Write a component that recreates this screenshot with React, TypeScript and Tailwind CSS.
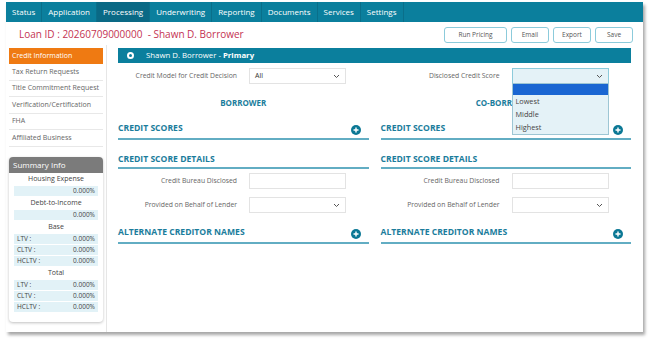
import React from 'react';

const tabs = ['Status', 'Application', 'Processing', 'Underwriting', 'Reporting', 'Documents', 'Services', 'Settings'];
const menu = ['Tax Return Requests', 'Title Commitment Request', 'Verification/Certification', 'FHA', 'Affiliated Business'];

const Chevron = () => (
  <svg width="7" height="5" viewBox="0 0 7 5" className="text-[#555]">
    <path d="M1 1l2.5 2.5L6 1" fill="none" stroke="currentColor" strokeWidth="1" />
  </svg>
);

const PlusIcon = () => (
  <span className="w-[10px] h-[10px] rounded-full bg-[#0b7895] flex items-center justify-center">
    <svg width="6" height="6" viewBox="0 0 6 6">
      <path d="M3 0.5v5M0.5 3h5" stroke="#fff" strokeWidth="1.4" />
    </svg>
  </span>
);

// section title with the teal rule under it; the plus variant sits a bit taller
const SectionHead: React.FC<{ title: string; plus?: boolean }> = ({ title, plus }) => (
  <div className={`flex items-start justify-between border-b-2 border-[#62adc3] pr-[8px] ${plus ? 'h-[17px]' : 'h-[15px]'}`}>
    <span className="text-[8.6px] leading-[11px] font-bold text-[#1b7d9c]">{title}</span>
    {plus && <span className="mt-[2px]"><PlusIcon /></span>}
  </div>
);

const Field: React.FC<{ label: string; select?: boolean; value?: string }> = ({ label, select, value }) => (
  <div className="flex items-center h-[16px]">
    <span className="w-[131px] text-right text-[6.8px] text-[#666] pr-[12px]">{label}</span>
    <div className="w-[97px] h-[16px] border border-[#e3e3e3] bg-white flex items-center justify-between px-[5px]">
      <span className="text-[7px] text-[#333]">{value ?? ''}</span>
      {select && <Chevron />}
    </div>
  </div>
);

const Column: React.FC<{ heading: string }> = ({ heading }) => (
  <div className="flex-1 flex flex-col">
    <div className="h-[11px] leading-[11px] mt-[13px] text-center text-[8px] font-bold text-[#1b7d9c]">{heading}</div>
    <div className="mt-[15px]"><SectionHead title="CREDIT SCORES" plus /></div>
    <div className="mt-[14px]"><SectionHead title="CREDIT SCORE DETAILS" /></div>
    <div className="mt-[4px] flex flex-col gap-[8px]">
      <Field label="Credit Bureau Disclosed" />
      <Field label="Provided on Behalf of Lender" select />
    </div>
    <div className="mt-[14px]"><SectionHead title="ALTERNATE CREDITOR NAMES" plus /></div>
  </div>
);

const SumRow: React.FC<{ label?: string }> = ({ label }) => (
  <div className="h-[10px] mb-[1px] bg-[#e2f2f7] flex items-center justify-between px-[3px] text-[6.5px] text-[#444]">
    <span>{label ?? ''}</span>
    <span>0.000%</span>
  </div>
);

const SumLabel: React.FC<{ text: string }> = ({ text }) => (
  <div className="h-[13px] flex items-center justify-center text-[7px] text-[#444]">{text}</div>
);

export default function App() {
  return (
    <div className="w-[649px] h-[342px] bg-white font-['Open_Sans',sans-serif] overflow-hidden">
      <div className="ml-[6px] mt-[2px] w-[637px] h-[330px] bg-white shadow-[2px_3px_3px_rgba(0,0,0,0.35)] flex flex-col">
        {/* top nav */}
        <div className="h-[20px] bg-[#0b7f9d] flex items-stretch">
          {tabs.map((t) => (
            <div
              key={t}
              className={`flex items-center px-[6px] text-[8px] text-white border-r border-[#0a6f8a] ${t === 'Processing' ? 'bg-[#0a6985]' : ''}`}
            >
              {t}
            </div>
          ))}
        </div>

        {/* loan header */}
        <div className="h-[23px] flex items-center justify-between pl-[13px] pr-[10px] pt-[2px]">
          <span className="text-[10px] text-[#c43252]">Loan ID : 20260709000000&nbsp; - Shawn D. Borrower</span>
          <div className="flex gap-[4px]">
            {['Run Pricing', 'Email', 'Export', 'Save'].map((b) => (
              <button
                key={b}
                className={`h-[16px] rounded-[3px] border border-[#8ccbdb] text-[6.5px] text-[#555] bg-white ${b === 'Run Pricing' ? 'w-[63px]' : 'w-[38px]'}`}
              >
                {b}
              </button>
            ))}
          </div>
        </div>

        <div className="flex flex-1">
          {/* sidebar */}
          <div className="w-[101px] border-r border-[#e6e6e6] pl-[3px] pr-[3px] pt-[3px] flex flex-col">
            <div className="h-[16px] bg-[#ef7a12] text-white text-[7px] flex items-center pl-[3px]">Credit Information</div>
            {menu.map((m) => (
              <div key={m} className="h-[16.5px] border-b border-[#e8e8e8] text-[7px] text-[#666] flex items-center pl-[3px]">
                {m}
              </div>
            ))}
            <div className="mt-[10px] rounded-[4px] shadow-[0_1px_3px_rgba(0,0,0,0.25)] bg-white pb-[9px]">
              <div className="h-[16px] bg-[#7b7b7b] rounded-t-[4px] text-white text-[8px] flex items-center pl-[4px]">Summary Info</div>
              <div className="px-[5px]">
                <SumLabel text="Housing Expense" />
                <SumRow />
                <SumLabel text="Debt-to-Income" />
                <SumRow />
                <SumLabel text="Base" />
                <SumRow label="LTV :" />
                <SumRow label="CLTV :" />
                <SumRow label="HCLTV :" />
                <SumLabel text="Total" />
                <SumRow label="LTV :" />
                <SumRow label="CLTV :" />
                <SumRow label="HCLTV :" />
              </div>
            </div>
          </div>

          {/* main */}
          <div className="flex-1 pl-[11px] pr-[12px] pt-[3px]">
            <div className="h-[15px] bg-[#0b7f9d] flex items-center pl-[9px] gap-[12px]">
              <span className="w-[7px] h-[7px] rounded-full border-[2px] border-white" />
              <span className="text-[7.8px] text-white">
                Shawn D. Borrower - <span className="font-bold">Primary</span>
              </span>
            </div>

            <div className="flex gap-[12px] mt-[5px]">
              <div className="flex-1">
                <Field label="Credit Model for Credit Decision" select value="All" />
              </div>
              <div className="flex-1 flex items-center h-[16px]">
                <span className="w-[131px] text-right text-[6.8px] text-[#666] pr-[12px]">Disclosed Credit Score</span>
                <div className="w-[97px] relative">
                  <div className="h-[16px] border border-[#8ccbdb] bg-[#e4f2f7] flex items-center justify-end px-[5px]">
                    <Chevron />
                  </div>
                  {/* open option list overlaying the co-borrower heading */}
                  <div className="absolute left-0 top-[15px] w-[97px] border border-[#9dc6d4] bg-[#e4f2f7] z-10 text-[7.3px] text-[#444]">
                    <div className="h-[11px] bg-[#1a66d2]" />
                    <div className="h-[13px] flex items-end pl-[3px] pb-[1px]">Lowest</div>
                    <div className="h-[13px] flex items-end pl-[3px] pb-[1px]">Middle</div>
                    <div className="h-[13px] flex items-end pl-[3px] pb-[1px]">Highest</div>
                  </div>
                </div>
              </div>
            </div>

            <div className="flex gap-[12px]">
              <Column heading="BORROWER" />
              <Column heading="CO-BORROWER" />
            </div>
          </div>
        </div>
      </div>
    </div>
  );
}
